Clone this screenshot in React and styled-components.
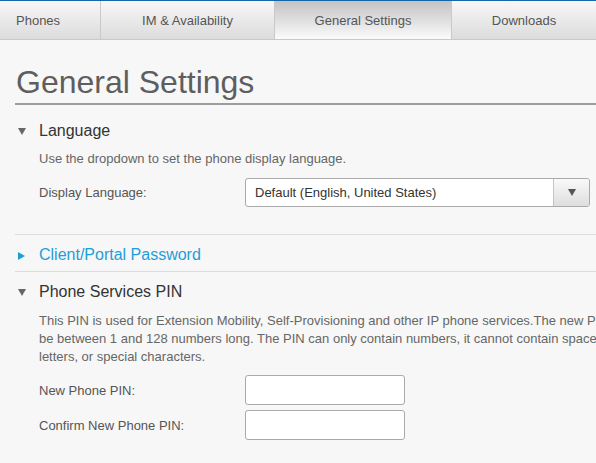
import React from 'react'
import styled, { createGlobalStyle } from 'styled-components'

const GlobalStyle = createGlobalStyle`
  html, body {
    margin: 0;
    padding: 0;
    background: #f7f7f7;
    overflow: hidden;
  }
  body {
    font-family: "Liberation Sans", Arial, sans-serif;
    color: #555;
  }
`

const Page = styled.div`
  width: 596px;
  height: 463px;
  overflow: hidden;
  background: #f7f7f7;
`

const TabBar = styled.div`
  display: flex;
  border-top: 1px solid #1666a8;
  border-bottom: 1px solid #c9c9c9;
  height: 38px;
`

const Tab = styled.div`
  width: ${p => p.width}px;
  flex: none;
  box-sizing: border-box;
  display: flex;
  align-items: center;
  justify-content: ${p => (p.left ? 'flex-start' : 'center')};
  padding-left: ${p => (p.left ? '16px' : '0')};
  border-left: ${p => (p.first ? 'none' : '1px solid #c9c9c9')};
  font-size: 13px;
  color: #555;
  background: ${p =>
    p.active
      ? 'linear-gradient(to bottom, #c3c3c3, #fbfbfb)'
      : 'linear-gradient(to bottom, #f7f7f7, #dcdcdc)'};
`

const Content = styled.div`
  padding-left: 15px;
`

const Title = styled.h1`
  margin: 24px 0 0;
  padding: 0 0 2px 1px;
  font-size: 32px;
  line-height: 37px;
  font-weight: normal;
  color: #5e5e5e;
  border-bottom: 2px solid #9c9c9c;
`

const Section = styled.section`
  border-top: ${p => (p.divided ? '1px solid #dcdcdc' : 'none')};
  padding: ${p => p.pad};
`

const SectionHead = styled.div`
  display: flex;
  align-items: center;
  height: 20px;
  font-size: 16px;
  color: ${p => (p.link ? '#1e9ed9' : '#333')};
`

const Arrow = styled.span`
  width: 24px;
  display: flex;
  align-items: center;
  padding-left: 3px;
  padding-top: 1px;
  box-sizing: border-box;
`

const Body = styled.div`
  padding-left: 24px;
`

const Desc = styled.p`
  margin: ${p => p.mt}px 0 0;
  font-size: 13px;
  line-height: 18px;
  color: #666;
  white-space: nowrap;
`

const FormRow = styled.div`
  display: flex;
  align-items: center;
  margin-top: ${p => p.mt}px;
`

const Label = styled.label`
  width: 206px;
  flex: none;
  font-size: 13px;
  color: #555;
`

const Select = styled.div`
  width: 345px;
  height: 29px;
  box-sizing: border-box;
  display: flex;
  align-items: stretch;
  border: 1px solid #aaa;
  border-radius: 3px;
  background: #fff;
  overflow: hidden;
`

const SelectValue = styled.div`
  flex: 1;
  display: flex;
  align-items: center;
  padding-left: 9px;
  font-size: 13px;
  color: #333;
`

const SelectButton = styled.div`
  width: 35px;
  display: flex;
  align-items: center;
  justify-content: center;
  border-left: 1px solid #c4c4c4;
  background: linear-gradient(to bottom, #f9f9f9, #dedede);
`

const Input = styled.input`
  width: 160px;
  height: 30px;
  box-sizing: border-box;
  border: 1px solid #aaa;
  border-radius: 3px;
  background: #fff;
  margin: 0;
`

const Down = ({ color = '#666' }) => (
  <svg width="8" height="7" viewBox="0 0 8 7">
    <path d="M0 0 L8 0 L4 7 Z" fill={color} />
  </svg>
)

const Right = ({ color = '#1e9ed9' }) => (
  <svg width="7" height="8" viewBox="0 0 7 8">
    <path d="M0 0 L7 4 L0 8 Z" fill={color} />
  </svg>
)

const App = () => {
  return (
    <Page>
      <GlobalStyle />
      <TabBar>
        <Tab width={100} first left>Phones</Tab>
        <Tab width={174}>IM &amp; Availability</Tab>
        <Tab width={177} active>General Settings</Tab>
        <Tab width={145}>Downloads</Tab>
      </TabBar>

      <Content>
        <Title>General Settings</Title>

        <Section pad="16px 0 27px">
          <SectionHead>
            <Arrow><Down /></Arrow>
            Language
          </SectionHead>
          <Body>
            <Desc mt={9}>Use the dropdown to set the phone display language.</Desc>
            <FormRow mt={10}>
              <Label>Display Language:</Label>
              <Select>
                <SelectValue>Default (English, United States)</SelectValue>
                <SelectButton><Down color="#555" /></SelectButton>
              </Select>
            </FormRow>
          </Body>
        </Section>

        <Section divided pad="10px 0 6px">
          <SectionHead link>
            <Arrow><Right /></Arrow>
            Client/Portal Password
          </SectionHead>
        </Section>

        <Section divided pad="10px 0 0">
          <SectionHead>
            <Arrow><Down /></Arrow>
            Phone Services PIN
          </SectionHead>
          <Body>
            <Desc mt={10}>
              This PIN is used for Extension Mobility, Self-Provisioning and other IP phone services.The new PIN must
              <br />
              be between 1 and 128 numbers long. The PIN can only contain numbers, it cannot contain spaces,
              <br />
              letters, or special characters.
            </Desc>
            <FormRow mt={9}>
              <Label>New Phone PIN:</Label>
              <Input type="password" />
            </FormRow>
            <FormRow mt={5}>
              <Label>Confirm New Phone PIN:</Label>
              <Input type="password" />
            </FormRow>
          </Body>
        </Section>
      </Content>
    </Page>
  )
}

export default App
